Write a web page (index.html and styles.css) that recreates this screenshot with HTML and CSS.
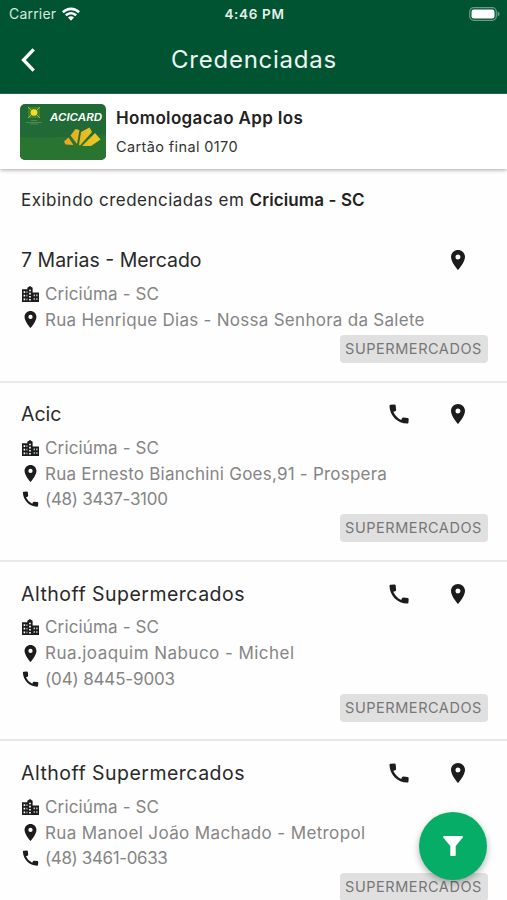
FILE: index.html
```html
<!DOCTYPE html>
<html lang="pt-BR">
<head>
<meta charset="utf-8">
<meta name="viewport" content="width=device-width">
<title>Credenciadas</title>
<link rel="stylesheet" href="styles.css">
</head>
<body>
<svg class="defs" aria-hidden="true">
  <symbol id="pin" viewBox="5 2 14 20"><path fill-rule="evenodd" d="M12 2C8.130 2 5 5.130 5 9c0 5.250 7 13 7 13s7-7.750 7-13c0-3.870-3.130-7-7-7zm0 9.500a2.500 2.500 0 1 1 0-5 2.500 2.500 0 0 1 0 5z"/></symbol>
  <symbol id="phone" viewBox="0 0 20 20"><path d="M1.500.8 5.500.5q1 0 1.200 1l.4 4.500q0 .9-.9 1.200L4.300 7.700Q6.500 13 12.200 16l.8-1.800q.4-.7 1.200-.7l4.500.4q1 .2 1 1.200l-.3 3.600q-.1.900-1.100.9C8.500 19.500.7 11.500.5 1.900Q.5.900 1.500.8z"/></symbol>
  <symbol id="city" viewBox="0 0 16 15"><path fill-rule="evenodd" d="M0 3h5V1.500L7.500 0 10 1.500V6h6v9H0zM1.500 5v1.500H3V5zM1.500 8.300v1.500H3V8.300zM1.500 11.800v1.500H3v-1.500zM6.700 3.500V5h1.600V3.500zM6.700 6.400v1.500h1.600V6.400zM6.700 9.300v1.500h1.600V9.300zM6.700 12.200v1.500h1.600v-1.500zM4.300 5v1.500H5V5zM4.300 8.300v1.500H5V8.300zM4.300 11.800v1.500H5v-1.500zM11 8v1.500h1V8zM11 11.500V13h1v-1.500zM13.500 8v1.500h1V8zM13.500 11.500V13h1v-1.500z"/></symbol>
</svg>
<header class="header">
  <div class="status">
    <span class="carrier">Carrier</span>
    <svg class="wifi" viewBox="0 0 18 14"><path d="M0 4.300C5-.9 13-.9 18 4.300L16.200 6.200C12.200 2.200 5.800 2.200 1.800 6.200zM3 7.500C6.400 4.100 11.600 4.100 15 7.500L13.200 9.300C10.800 7 7.200 7 4.800 9.300zM6 10.500C7.700 8.900 10.300 8.900 12 10.500L9 13.700z"/></svg>
    <span class="time">4:46 PM</span>
    <svg class="battery" viewBox="0 0 31 14"><rect class="shell" x=".7" y=".7" width="26.600" height="12.600" rx="4"/><rect x="2.500" y="2.500" width="23" height="9" rx="2.200"/><path class="tip" d="M28.600 4.600c2.600.8 2.600 4 0 4.800z"/></svg>
  </div>
  <div class="bar">
    <svg class="back" viewBox="0 0 14 24"><path d="M12.700 1.300 2.500 12l10.200 10.700"/></svg>
    <h1><span class="t-title">Credenciadas</span></h1>
  </div>
</header>
<section class="account">
  <svg class="card" viewBox="0 0 86 56">
    <defs><linearGradient id="gold"><stop offset="0" stop-color="#e9a51f"/><stop offset="1" stop-color="#e8cc27"/></linearGradient></defs>
    <rect width="86" height="56" rx="5" fill="#206a36"/>
    <path d="M0 33Q45 34 86 31V51a5 5 0 0 1-5 5H5a5 5 0 0 1-5-5z" fill="#297431"/>
    <path d="M8 3h12v11H8z" fill="#477f29"/><circle cx="14" cy="8.500" r="3.300" fill="#f0dd32"/><path d="M8 3l3 3M20 3l-3 3M8 14l3-3M20 14l-3-3" stroke="#a6b833"/>
    <path d="M11 16.500h6M6 18.500h16M10 20h8" stroke="#5d8e61" stroke-width=".8"/>
    <text class="brand" x="30" y="16.500" textLength="52" lengthAdjust="spacingAndGlyphs">ACICARD</text>
    <path fill="url(#gold)" d="m44 37.500 4.500-4 5 7.500-8-.5zM50.500 31.500l5-6.500 4 1L57 40zM59 41 61 28l8.500-4.500 2.500 4.500-12 13.500zM62 42l13-13 5.500 6.500-9.500 6.500z"/>
  </svg>
  <div class="who"><strong class="t-name">Homologacao App Ios</strong><span class="t-final">Cartão final 0170</span></div>
</section>
<main>
  <p class="showing"><span class="t-show">Exibindo credenciadas em </span><b class="t-city">Criciuma - SC</b></p>
  <article class="item">
    <div class="head"><h2 class="w1">7 Marias - Mercado</h2><svg class="act pin"><use href="#pin"/></svg></div>
    <div class="line"><svg class="ico"><use href="#city"/></svg><span class="c">Criciúma - SC</span></div>
    <div class="line"><svg class="ico pin"><use href="#pin"/></svg><span class="a1">Rua Henrique Dias - Nossa Senhora da Salete</span></div>
    <span class="tag">SUPERMERCADOS</span>
  </article>
  <article class="item">
    <div class="head"><h2 class="w2">Acic</h2><svg class="act"><use href="#phone"/></svg><svg class="act pin"><use href="#pin"/></svg></div>
    <div class="line"><svg class="ico"><use href="#city"/></svg><span class="c">Criciúma - SC</span></div>
    <div class="line"><svg class="ico pin"><use href="#pin"/></svg><span class="a2">Rua Ernesto Bianchini Goes,91 - Prospera</span></div>
    <div class="line"><svg class="ico"><use href="#phone"/></svg><span class="p1">(48) 3437-3100</span></div>
    <span class="tag">SUPERMERCADOS</span>
  </article>
  <article class="item">
    <div class="head"><h2 class="w3">Althoff Supermercados</h2><svg class="act"><use href="#phone"/></svg><svg class="act pin"><use href="#pin"/></svg></div>
    <div class="line"><svg class="ico"><use href="#city"/></svg><span class="c">Criciúma - SC</span></div>
    <div class="line"><svg class="ico pin"><use href="#pin"/></svg><span class="a3">Rua.joaquim Nabuco - Michel</span></div>
    <div class="line"><svg class="ico"><use href="#phone"/></svg><span class="p2">(04) 8445-9003</span></div>
    <span class="tag">SUPERMERCADOS</span>
  </article>
  <article class="item">
    <div class="head"><h2 class="w3">Althoff Supermercados</h2><svg class="act"><use href="#phone"/></svg><svg class="act pin"><use href="#pin"/></svg></div>
    <div class="line"><svg class="ico"><use href="#city"/></svg><span class="c">Criciúma - SC</span></div>
    <div class="line"><svg class="ico pin"><use href="#pin"/></svg><span class="a4">Rua Manoel João Machado - Metropol</span></div>
    <div class="line"><svg class="ico"><use href="#phone"/></svg><span class="p3">(48) 3461-0633</span></div>
    <span class="tag">SUPERMERCADOS</span>
  </article>
</main>
<button class="fab" aria-label="Filtrar"><svg viewBox="0 0 20 20"><path d="M1 0h18c.9 0 1.200 1 .6 1.700L12.700 10v9c0 .6-.4 1-1 1H8.300c-.6 0-1-.4-1-1v-9L.4 1.700C-.2 1 .1 0 1 0z"/></svg></button>
</body>
</html>
```
FILE: styles.css
```css
* { box-sizing: border-box; }
body { margin: 0; height: 900px; overflow: hidden; background: #fefefe; color: #2b2b2b; font-family: Inter, "Open Sans", sans-serif; position: relative; }
h1, h2, p { margin: 0; font-weight: 400; }
span, b, strong, h2 { white-space: nowrap; }
.defs { position: absolute; width: 0; height: 0; }

.header { height: 94px; background: #005432; color: #fff; border-bottom: 1px solid #2a7052; }
.status { height: 27px; display: grid; grid-template-columns: 53px 1fr auto 1fr 53px; align-items: center; padding: 0 7px 0 9px; font-size: 14px; }
.carrier { color: #d8e8df; letter-spacing: .2px; }
.wifi { width: 18px; height: 14px; fill: #fff; }
.time { font-weight: 600; font-size: 13.500px; color: #e5f0e9; letter-spacing: .65px; }
.battery { grid-column: 5; justify-self: end; width: 31px; height: 14px; fill: #fff; }
.shell { fill: none; stroke: #6b9c83; stroke-width: 1.200; }
.tip { fill: #6b9c83; }
.bar { height: 66px; display: grid; grid-template-columns: 55px 1fr 54px; align-items: center; }
.back { width: 14px; height: 24px; margin-left: 21px; fill: none; stroke: #fff; stroke-width: 3.300; }
h1 { text-align: center; font-size: 24px; color: #eff7f2; line-height: 30px; }
.t-title { letter-spacing: .75px; }

.account { height: 75px; display: flex; align-items: center; gap: 10px; padding: 0 20px; background: #fff; box-shadow: 0 1px 4px rgba(0,0,0,.35); }
.card { width: 86px; height: 56px; }
.brand { font: italic 600 10.500px Inter, sans-serif; fill: #fff; }
.who { display: grid; grid-template-rows: 29px 28px; align-items: center; color: #222; }
.t-name { font-size: 17px; font-weight: 600; letter-spacing: .35px; }
.t-final { font-size: 14.500px; letter-spacing: .38px; color: #333; }

.showing { height: 59.800px; padding: 18px 21px 0; font-size: 17px; line-height: 26px; white-space: pre; }
.t-show { white-space: pre; letter-spacing: .49px; }
.t-city { font-weight: 600; color: #222; letter-spacing: .1px; }

.item { display: flex; flex-direction: column; padding: 10.600px 19.500px 17.800px 21px; border-bottom: 2px solid #e8e8e8; }
.head { height: 42px; display: flex; align-items: center; padding-right: 19.500px; gap: 39px; }
.head h2 { margin-right: auto; font-size: 19.500px; color: #292929; }
.w3 { letter-spacing: .48px; }
.act { width: 20px; height: 20px; fill: #1c1c1c; }
.line { height: 25.700px; display: flex; align-items: center; gap: 6px; padding-left: 1px; color: #858585; font-size: 17px; }
.ico { width: 17px; height: 16px; fill: #1c1c1c; }
.ico.pin { height: 17px; }
.c { letter-spacing: .15px; }
.a1 { letter-spacing: .28px; }
.a2 { letter-spacing: .23px; }
.a3 { letter-spacing: .46px; }
.a4 { letter-spacing: .37px; }
.p1 { letter-spacing: -.3px; }
.p2 { letter-spacing: -.15px; }
.p3 { letter-spacing: -.38px; }
.tag { align-self: flex-end; margin-top: 2px; width: 148px; height: 28px; border-radius: 4px; background: #e0e0e0; color: #777; font-size: 14.500px; line-height: 28px; text-align: center; letter-spacing: .55px; }

.fab { position: absolute; left: 419px; top: 812px; width: 68px; height: 68px; padding: 0; border: 0; border-radius: 50%; background: #05ad66; box-shadow: 0 3px 7px rgba(0,0,0,.3); display: grid; place-items: center; }
.fab svg { width: 20px; height: 20px; fill: #fff; }
```
